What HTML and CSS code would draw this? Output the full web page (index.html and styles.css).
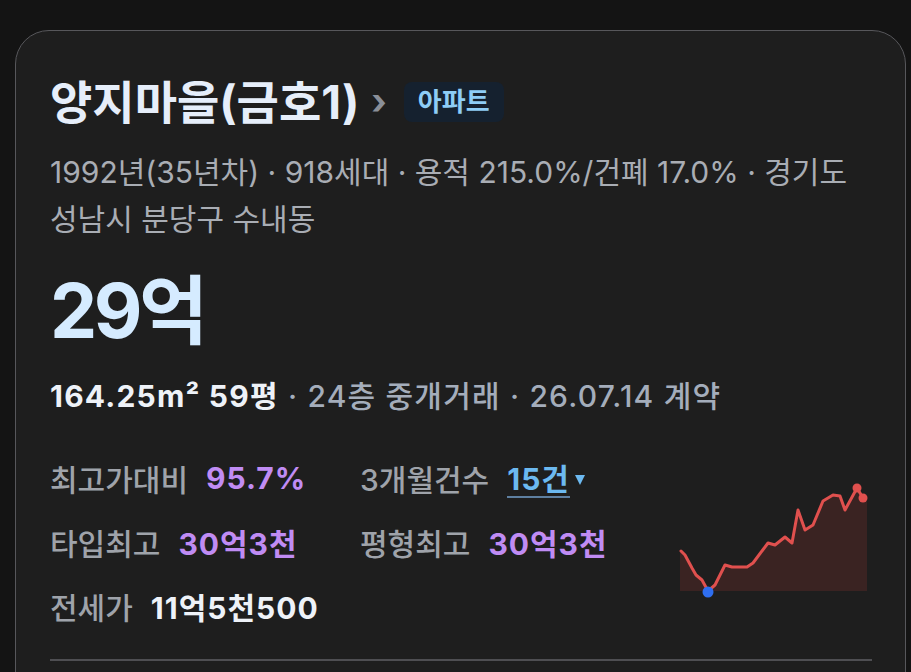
FILE: index.html
```html
<!DOCTYPE html>
<html lang="ko">
<head>
<meta charset="utf-8">
<link rel="stylesheet" href="styles.css">
</head>
<body>
<div class="card">
  <div class="title-row">
    <h1 class="title">양지마을(금호1)</h1>
    <span class="chev">›</span>
    <span class="badge">아파트</span>
  </div>
  <p class="meta">1992년(35년차) · 918세대 · 용적 215.0%/건폐 17.0% · 경기도 성남시 분당구 수내동</p>
  <div class="price">29억</div>
  <div class="spec"><b>164.25m² 59평</b> · 24층 중개거래 · 26.07.14 계약</div>
  <div class="stats">
    <div class="grid">
      <div class="cell"><span class="lbl">최고가대비</span><span class="val purple">95.7%</span></div>
      <div class="cell"><span class="lbl">3개월건수</span><span class="val blue">15건</span><span class="tri"></span></div>
      <div class="cell"><span class="lbl">타입최고</span><span class="val purple">30억3천</span></div>
      <div class="cell"><span class="lbl">평형최고</span><span class="val purple">30억3천</span></div>
      <div class="cell"><span class="lbl">전세가</span><span class="val white">11억5천500</span></div>
    </div>
    <svg class="chart" width="190" height="118" viewBox="0 0 190 118">
      <polygon fill="#3a2322" points="2,70 3,70 7,74 14,87 18,94 24,99 30,110 37,104 47,84 54,86 69,86 75,82 90,62 97,64 107,56 114,62 120,29 127,49 135,44 145,20 155,14 162,15 167,29 179,7 185,17 189,17 189,110 2,110"/>
      <polyline fill="none" stroke="#e0504e" stroke-width="3" stroke-linejoin="round" stroke-linecap="round" points="3,70 7,74 14,87 18,94 24,99 30,110 37,104 47,84 54,86 69,86 75,82 90,62 97,64 107,56 114,62 120,29 127,49 135,44 145,20 155,14 162,15 167,29 179,7 185,17"/>
      <circle cx="179" cy="7" r="4.5" fill="#e0504e"/>
      <circle cx="185" cy="17" r="4.5" fill="#e0504e"/>
      <circle cx="30" cy="111" r="5.5" fill="#2f6ef0"/>
    </svg>
  </div>
  <div class="divider"></div>
</div>
</body>
</html>
```

FILE: styles.css
```css
html, body {
  margin: 0;
  padding: 0;
  background: #141414;
  height: 672px;
  overflow: hidden;
}
body {
  font-family: Inter, "Noto Sans CJK KR", sans-serif;
  padding: 30px 0 0 15px;
  box-sizing: border-box;
}
.card {
  width: 891px;
  height: 700px;
  box-sizing: border-box;
  background: #1e1e1e;
  border: 1.5px solid #57575b;
  border-radius: 34px;
  padding: 44px 33px 0 34px;
}
.title-row {
  display: flex;
  align-items: center;
  height: 54px;
}
.title {
  margin: 0;
  font-size: 46px;
  font-weight: 700;
  color: #e6eefa;
  letter-spacing: 0;
  line-height: 54px;
}
.chev {
  color: #8a8f98;
  font-size: 36px;
  font-weight: 700;
  margin-left: 12px;
  line-height: 1;
  position: relative;
  top: -1px;
}
.badge {
  margin-left: 17px;
  background: #15212f;
  color: #8ecdf6;
  font-size: 26px;
  font-weight: 700;
  padding: 0 14px;
  height: 40px;
  line-height: 40px;
  border-radius: 8px;
}
.meta {
  margin: 20px 0 0;
  font-size: 30px;
  line-height: 47px;
  color: #a9adb4;
  font-weight: 400;
  letter-spacing: 0;
  word-break: keep-all;
}
.price {
  margin-top: 22px;
  font-size: 75px;
  font-weight: 700;
  line-height: 92px;
  color: #d5ebff;
  letter-spacing: -3.5px;
}
.spec {
  margin-top: 21px;
  font-size: 30px;
  line-height: 36px;
  color: #a4adbb;
  font-weight: 500;
  letter-spacing: 1.2px;
}
.spec b {
  color: #eef2f8;
  font-weight: 700;
}
.stats {
  margin-top: 32px;
  display: flex;
  align-items: flex-start;
}
.grid {
  display: grid;
  grid-template-columns: 310px auto;
  grid-auto-rows: 64px;
}
.cell {
  display: flex;
  align-items: center;
  font-size: 30px;
}
.lbl {
  color: #9fa3aa;
  font-weight: 500;
  margin-right: 18px;
  letter-spacing: 0;
}
.val {
  font-weight: 700;
  letter-spacing: 1px;
}
.purple { color: #c08cf4; }
.white { color: #eef2f8; }
.blue {
  color: #6cb9f0;
  border-bottom: 2.5px solid #5e7fa0;
  line-height: 34px;
  margin-top: 4px;
}
.tri {
  width: 0;
  height: 0;
  border-left: 5px solid transparent;
  border-right: 5px solid transparent;
  border-top: 10px solid #6cb9f0;
  margin-left: 5px;
  margin-top: 4px;
}
.chart {
  display: block;
  margin-left: auto;
  margin-right: 4px;
  margin-top: 35px;
}
.divider {
  margin-top: 21px;
  height: 2px;
  background: #4e4e52;
}
```
